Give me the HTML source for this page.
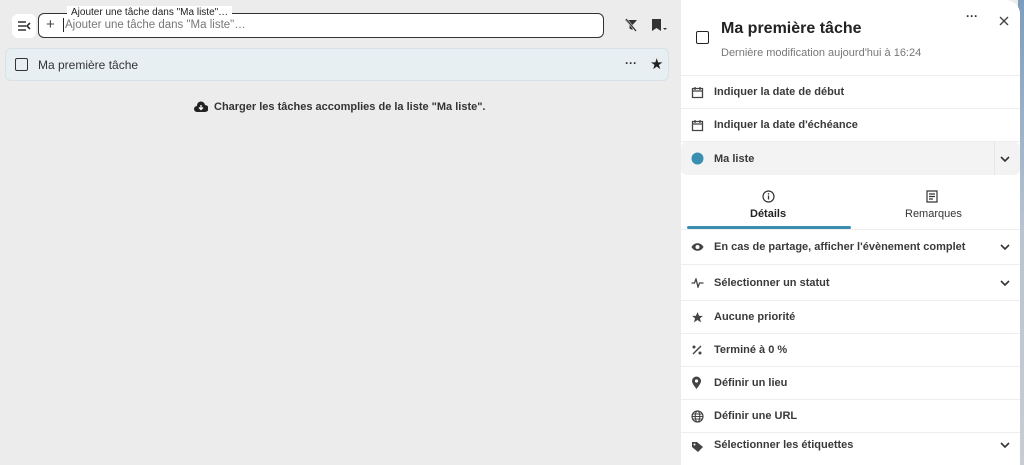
<!DOCTYPE html>
<html><head><meta charset="utf-8"><style>
*{box-sizing:border-box;margin:0;padding:0}
body{width:1024px;height:465px;overflow:hidden;background:#ececec;font-family:"Liberation Sans","DejaVu Sans",sans-serif;position:relative;color:#222}
.abs{position:absolute}
.strip{left:1018px;top:0;width:6px;height:465px;background:linear-gradient(#7d9cbc,#b8c4d0 50%,#c9ccd2)}
.panel{left:681px;top:0;width:339px;height:465px;background:#fff;border-top-right-radius:14px}
.row{position:absolute;left:0;width:339px;display:flex;align-items:center;font-size:11px;font-weight:bold;color:#3a3a3a;border-bottom:1px solid #eee}
.row svg{position:absolute;left:10px}
.row span{position:absolute;left:33px}
.chev{position:absolute;right:12px}
</style></head><body>
<div class="abs strip"></div>
<div class="abs" style="left:12px;top:14px;width:24px;height:24px;background:#fff;border-radius:6px"></div>
<svg class="abs" style="left:17px;top:20px" width="14" height="12" viewBox="0 0 14 12"><path d="M1 2h8M1 6h8M1 10h8M13 3l-3 3 3 3" stroke="#333" stroke-width="1.6" fill="none"/></svg>
<div class="abs" style="left:38px;top:13px;width:566px;height:25px;border:1.5px solid #333;border-radius:6px;background:#fff"></div>
<div class="abs" style="left:67px;top:6px;background:#fff;padding:0 4px;font-size:10px;color:#222;line-height:13px">Ajouter une tâche dans "Ma liste"…</div>
<div class="abs" style="left:46px;top:16px;font-size:15px;color:#444">+</div>
<div class="abs" style="left:63px;top:18px;width:1px;height:14px;background:#222"></div>
<div class="abs" style="left:65px;top:19px;font-size:11.5px;color:#777">Ajouter une tâche dans "Ma liste"…</div>
<svg class="abs" style="left:624px;top:18px" width="14" height="14" viewBox="0 0 14 14"><path d="M1 2h12l-4.5 5v5l-3-1.5V7z" fill="#333"/><path d="M2 1l10 12" stroke="#ececec" stroke-width="2.2"/><path d="M2 1l10 12" stroke="#333" stroke-width="1.3"/></svg>
<svg class="abs" style="left:651px;top:18px" width="18" height="14" viewBox="0 0 18 14"><path d="M1 1h9v12l-4.5-3L1 13z" fill="#333"/><path d="M12 10l2 2 2-2z" fill="#333"/></svg>
<div class="abs" style="left:5px;top:48px;width:664px;height:33px;background:#e8eff3;border:1px solid #d8e1e7;border-radius:6px"></div>
<div class="abs" style="left:15px;top:58px;width:13px;height:13px;border:1.6px solid #333;border-radius:2px"></div>
<div class="abs" style="left:38px;top:58px;font-size:12px;color:#333">Ma première tâche</div>
<div class="abs" style="left:625px;top:56px;font-size:12px;font-weight:bold;color:#333">···</div>
<div class="abs" style="left:650px;top:55px;font-size:15px;color:#222">★</div>
<svg class="abs" style="left:194px;top:101px" width="14" height="12" viewBox="0 0 14 12"><path d="M3 11a3 3 0 0 1 0-6 4 4 0 0 1 8-1 3.5 3.5 0 0 1 0 7z" fill="#222"/><path d="M7 4v4M5 6.5l2 2 2-2" stroke="#fff" stroke-width="1.3" fill="none"/></svg>
<div class="abs" style="left:214px;top:101px;font-size:11px;font-weight:bold;color:#333">Charger les tâches accomplies de la liste "Ma liste".</div>
<div class="abs panel">
<div class="abs" style="left:15px;top:31px;width:13px;height:13px;border:1.6px solid #222;border-radius:2px"></div>
<div class="abs" style="left:40px;top:20px;font-size:16px;font-weight:bold;color:#222">Ma première tâche</div>
<div class="abs" style="left:40px;top:47px;font-size:11px;color:#777">Dernière modification aujourd'hui à 16:24</div>
<div class="abs" style="left:285px;top:9px;font-size:12px;font-weight:bold;color:#333">···</div>
<svg class="abs" style="left:318px;top:16px" width="10" height="10" viewBox="0 0 10 10"><path d="M1 1l8 8M9 1l-8 8" stroke="#444" stroke-width="1.4"/></svg>
<div class="abs" style="left:0;top:75px;width:339px;height:1px;background:#eee"></div>
<div class="row" style="top:76px;height:33px"><svg width="13" height="13" viewBox="0 0 13 13"><path d="M1.5 2.5h10v9h-10zM1.5 5h10M4 1v3M9 1v3" stroke="#444" stroke-width="1.3" fill="none"/></svg><span>Indiquer la date de début</span></div>
<div class="row" style="top:109px;height:33px"><svg width="13" height="13" viewBox="0 0 13 13"><path d="M1.5 2.5h10v9h-10zM1.5 5h10M4 1v3M9 1v3" stroke="#444" stroke-width="1.3" fill="none"/></svg><span>Indiquer la date d'échéance</span></div>
<div class="row" style="top:142px;height:33px;background:#f3f3f3;border-radius:6px;border:none"><svg width="13" height="13"><circle cx="6.5" cy="6.5" r="6" fill="#3a8fb0"/></svg><span>Ma liste</span><div style="position:absolute;right:0;top:0;width:26px;height:33px;border-left:1px solid #e6e6e6"></div><svg class="chev" style="left:auto;right:10px" width="10" height="6" viewBox="0 0 10 6"><path d="M1 1l4 4 4-4" stroke="#333" stroke-width="1.6" fill="none"/></svg></div>
<svg class="abs" style="left:81px;top:190px" width="13" height="13" viewBox="0 0 13 13"><circle cx="6.5" cy="6.5" r="5.5" stroke="#333" stroke-width="1.2" fill="none"/><path d="M6.5 5.5v4" stroke="#333" stroke-width="1.3"/><circle cx="6.5" cy="3.8" r=".8" fill="#333"/></svg>
<div class="abs" style="left:69px;top:208px;font-size:11px;font-weight:bold;color:#222">Détails</div>
<svg class="abs" style="left:245px;top:190px" width="12" height="13" viewBox="0 0 12 13"><path d="M1 1h10v11H1zM3 4h6M3 6.5h6M3 9h4" stroke="#333" stroke-width="1.2" fill="none"/></svg>
<div class="abs" style="left:224px;top:208px;font-size:11px;color:#333">Remarques</div>
<div class="abs" style="left:6px;top:226px;width:164px;height:3px;background:#3a8fb0;border-radius:2px"></div>
<div class="abs" style="left:0;top:229px;width:339px;height:1px;background:#eee"></div>
<div class="row" style="top:230px;height:35px"><svg width="13" height="10" viewBox="0 0 13 10"><path d="M.5 5C3 0 10 0 12.5 5 10 10 3 10 .5 5z" fill="#444"/><circle cx="6.5" cy="5" r="2" fill="#fff"/></svg><span>En cas de partage, afficher l'évènement complet</span><svg class="chev" style="left:auto;right:10px" width="10" height="6" viewBox="0 0 10 6"><path d="M1 1l4 4 4-4" stroke="#333" stroke-width="1.6" fill="none"/></svg></div>
<div class="row" style="top:265px;height:36px"><svg width="13" height="10" viewBox="0 0 13 10"><path d="M.5 5h3l1.5-4 2 8 1.5-4h4" stroke="#444" stroke-width="1.3" fill="none"/></svg><span>Sélectionner un statut</span><svg class="chev" style="left:auto;right:10px" width="10" height="6" viewBox="0 0 10 6"><path d="M1 1l4 4 4-4" stroke="#333" stroke-width="1.6" fill="none"/></svg></div>
<div class="row" style="top:301px;height:33px"><svg width="13" height="13" viewBox="0 0 24 24"><path d="M12 2l3 7h7l-5.5 4.5 2 7.5L12 16.5 5.5 21l2-7.5L2 9h7z" fill="#444"/></svg><span>Aucune priorité</span></div>
<div class="row" style="top:334px;height:33px"><svg width="12" height="12" viewBox="0 0 12 12"><path d="M10 2L2 10" stroke="#444" stroke-width="1.4"/><circle cx="3" cy="3" r="1.5" fill="#444"/><circle cx="9" cy="9" r="1.5" fill="#444"/></svg><span>Terminé à 0 %</span></div>
<div class="row" style="top:367px;height:33px"><svg width="11" height="14" viewBox="0 0 11 14"><path d="M5.5 13C2 8.5 1 6.5 1 5a4.5 4.5 0 0 1 9 0c0 1.5-1 3.5-4.5 8z" fill="#444"/><circle cx="5.5" cy="5" r="1.6" fill="#fff"/></svg><span>Définir un lieu</span></div>
<div class="row" style="top:400px;height:33px"><svg width="13" height="13" viewBox="0 0 13 13"><circle cx="6.5" cy="6.5" r="5.5" stroke="#444" stroke-width="1.2" fill="none"/><ellipse cx="6.5" cy="6.5" rx="2.3" ry="5.5" stroke="#444" stroke-width="1.1" fill="none"/><path d="M1 6.5h11M2 4h9M2 9h9" stroke="#444" stroke-width="1"/></svg><span>Définir une URL</span></div>
<div class="row" style="top:433px;height:24px;border:none"><svg style="top:8px" width="14" height="12" viewBox="0 0 14 12"><path d="M1 1h5l6 5-5 5-6-5z" fill="#444"/><circle cx="3.5" cy="3.5" r="1" fill="#fff"/></svg><span>Sélectionner les étiquettes</span><svg class="chev" style="left:auto;right:10px" width="10" height="6" viewBox="0 0 10 6"><path d="M1 1l4 4 4-4" stroke="#333" stroke-width="1.6" fill="none"/></svg></div>
</div>
</body></html>
